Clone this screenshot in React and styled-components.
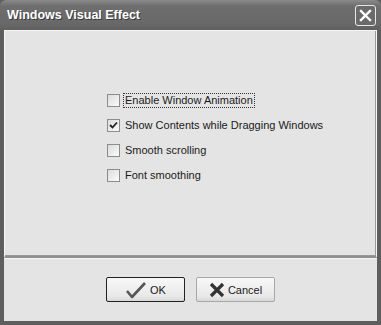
import React from 'react'
import styled, { createGlobalStyle } from 'styled-components';

const Global = createGlobalStyle`
  html, body { margin: 0; padding: 0; background: #5e5e5e; }
  body { font-family: "Liberation Sans", Arial, sans-serif; }
`;

const options = [
    { label: 'Enable Window Animation', checked: false, focused: true },
    { label: 'Show Contents while Dragging Windows', checked: true },
    { label: 'Smooth scrolling', checked: false },
    { label: 'Font smoothing', checked: false },
];

export default function App() {
    return (
        <Window>
            <Global />
            <TitleBar>
                <Title>Windows Visual Effect</Title>
                <CloseButton>
                    <svg width="13" height="13" viewBox="0 0 13 13">
                        <path d="M2 2 L11 11 M11 2 L2 11" stroke="#fff" strokeWidth="2.4" strokeLinecap="square" />
                    </svg>
                </CloseButton>
            </TitleBar>
            <Body>
                <Panel>
                    <OptionList>
                        {options.map((o) => (
                            <Option key={o.label}>
                                <Box>
                                    {o.checked && (
                                        <svg width="9" height="9" viewBox="0 0 9 9">
                                            <path d="M1 4 L3.5 6.5 L8 1.5" stroke="#222" strokeWidth="1.8" fill="none" />
                                        </svg>
                                    )}
                                </Box>
                                <Label $focused={o.focused}>{o.label}</Label>
                            </Option>
                        ))}
                    </OptionList>
                </Panel>
                <ButtonBar>
                    <Button $default>
                        <svg width="22" height="18" viewBox="0 0 22 18">
                            <path d="M2 10 L7 16 L20 2" stroke="#555" strokeWidth="2.6" fill="none" strokeLinejoin="round" />
                        </svg>
                        OK
                    </Button>
                    <Button>
                        <svg width="16" height="16" viewBox="0 0 16 16">
                            <path d="M2 2 L14 14 M14 2 L2 14" stroke="#333" strokeWidth="3.2" />
                        </svg>
                        Cancel
                    </Button>
                </ButtonBar>
            </Body>
        </Window>
    )
}

const Window = styled.div`
    width: 381px;
    height: 325px;
    display: flex;
    flex-direction: column;
    background: #5e5e5e;
    overflow: hidden;
`;
const TitleBar = styled.div`
    height: 30px;
    display: flex;
    align-items: center;
    justify-content: space-between;
    padding: 0 5px 0 7px;
    border-radius: 6px 6px 0 0;
    background: linear-gradient(#8a8a8a 0%, #6e6e6e 20%, #686868 80%, #606060 100%);
    box-sizing: border-box;
`;
const Title = styled.span`
    color: #fff;
    font-family: "Liberation Sans", Arial, sans-serif;
    font-weight: bold;
    font-size: 12.5px;
    text-shadow: 1px 1px 0 #3a3a3a;
`;
const CloseButton = styled.div`
    width: 19px;
    height: 19px;
    border: 1px solid #e8e8e8;
    border-radius: 3px;
    background: #6a6a6a;
    display: flex;
    align-items: center;
    justify-content: center;
`;
const Body = styled.div`
    flex: 1;
    display: flex;
    flex-direction: column;
    border-left: 4px solid #5e5e5e;
    border-right: 4px solid #5e5e5e;
    border-bottom: 4px solid #5e5e5e;
    background: #e4e4e4;
`;
const Panel = styled.div`
    flex: 1;
    border: 1px solid #f6f6f6;
    box-shadow: inset -1px -1px 0 #9a9a9a;
    border-bottom: 2px solid #909090;
    padding: 63px 0 0 102px;
`;
const OptionList = styled.div`
    display: flex;
    flex-direction: column;
    gap: 12px;
`;
const Option = styled.div`
    display: flex;
    align-items: center;
    height: 13px;
`;
const Box = styled.div`
    width: 11px;
    height: 11px;
    border: 1px solid #8c8c8c;
    background: linear-gradient(135deg, #dcdcdc, #fafafa);
    display: flex;
    align-items: center;
    justify-content: center;
    margin-right: 4px;
`;
const Label = styled.span`
    font-size: 11px;
    color: #1a1a1a;
    padding: 0 1px;
    outline: ${(p) => (p.$focused ? '1px dotted #333' : 'none')};
    line-height: 13px;
`;
const ButtonBar = styled.div`
    height: 63px;
    display: flex;
    justify-content: center;
    gap: 11px;
    padding-top: 18px;
    box-sizing: border-box;
    border-top: 1px solid #f6f6f6;
`;
const Button = styled.div`
    width: 79px;
    height: 25px;
    box-sizing: border-box;
    display: flex;
    align-items: center;
    justify-content: center;
    gap: 3px;
    font-size: 11px;
    color: #1a1a1a;
    border: 1px solid ${(p) => (p.$default ? '#222' : '#a8a8a8')};
    background: linear-gradient(#f8f8f8, #e8e8e8 80%, #d8d8d8);
    border-radius: 2px;
`;
